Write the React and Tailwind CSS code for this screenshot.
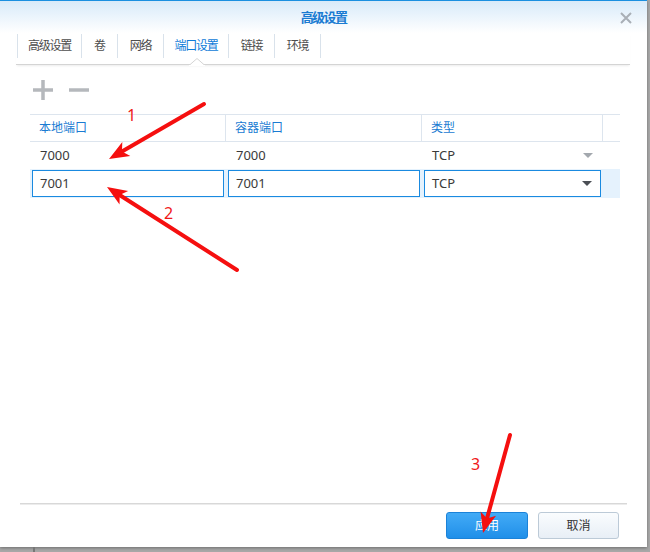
import React from "react";

const font = { fontFamily: '"Noto Sans", "Noto Sans CJK SC", sans-serif' };

const tabs = [
  { label: "高级设置", w: "w-[65px]" },
  { label: "卷", w: "w-[36px]" },
  { label: "网络", w: "w-[46px]" },
  { label: "端口设置", w: "w-[65px]", active: true },
  { label: "链接", w: "w-[46px]" },
  { label: "环境", w: "w-[46px]" },
];

// red annotation arrows (tail -> tip)
function Arrow({ x1, y1, x2, y2 }) {
  const dx = x2 - x1;
  const dy = y2 - y1;
  const len = Math.sqrt(dx * dx + dy * dy);
  const ux = dx / len;
  const uy = dy / len;
  const hl = 20;
  const hw = 8;
  const bx = x2 - ux * hl;
  const by = y2 - uy * hl;
  const pts = `${x2},${y2} ${bx - uy * hw},${by + ux * hw} ${bx + ux * 5},${by + uy * 5} ${bx + uy * hw},${by - ux * hw}`;
  return (
    <g>
      <line x1={x1} y1={y1} x2={bx + ux * 6} y2={by + uy * 6} stroke="#f50f0f" strokeWidth="4" strokeLinecap="round" />
      <polygon points={pts} fill="#f50f0f" />
    </g>
  );
}

function Caret({ dark }) {
  return (
    <svg width="10" height="5" viewBox="0 0 10 5">
      <polygon points="0,0 10,0 5,5" fill={dark ? "#4b4f55" : "#a3a8ae"} />
    </svg>
  );
}

export default function App() {
  return (
    <div className="relative w-[650px] h-[552px] bg-[#a8a8a8] overflow-hidden" style={font}>
      <div className="flex flex-col w-[647px] h-[547px] bg-white shadow-[0_1px_3px_rgba(0,0,0,0.35)]">
        {/* title bar */}
        <div className="relative h-[33px] border-t border-[#1a8fe0] bg-gradient-to-b from-[#d8eaf9] to-white flex items-center justify-center">
          <span className="text-[13px] font-bold text-[#1a7bd2] tracking-[-1.6px] leading-none">高级设置</span>
          <svg className="absolute left-[620px] top-[11px]" width="12" height="12" viewBox="0 0 12 12">
            <path d="M1 1 L11 11 M11 1 L1 11" stroke="#a9afb6" strokeWidth="2" />
          </svg>
        </div>

        {/* tabs */}
        <div className="relative ml-[16px] w-[614px] h-[32px] border-b border-[#d4d4d4] shadow-[0_2px_2px_-1px_rgba(0,0,0,0.08)]">
          <div className="flex ml-[1px] mt-[1px] h-[24px]">
            {tabs.map((t, i) => (
              <div
                key={t.label}
                className={`${t.w} flex items-center justify-center border-r border-[#d9e2eb] ${i === 0 ? "border-l" : ""}`}
              >
                <span className={`text-[12px] tracking-[-1.2px] leading-none ${t.active ? "text-[#0f7bd8]" : "text-[#4d4d4d]"}`}>
                  {t.label}
                </span>
              </div>
            ))}
          </div>
          <svg className="absolute left-[173px] top-[25px]" width="16" height="8" viewBox="0 0 16 8">
            <polyline points="0,7.5 8,0.5 16,7.5" fill="white" stroke="#d4d4d4" strokeWidth="1" />
            <rect x="0" y="7" width="16" height="2" fill="white" />
          </svg>
        </div>

        {/* toolbar */}
        <div className="flex items-center gap-[16px] ml-[33px] mt-[15px] h-[20px]">
          <svg width="20" height="20" viewBox="0 0 20 20">
            <path d="M0 10 H20 M10 0 V20" stroke="#b5b8bc" strokeWidth="3.5" />
          </svg>
          <svg width="20" height="20" viewBox="0 0 20 20">
            <path d="M0 10 H20" stroke="#b5b8bc" strokeWidth="3.5" />
          </svg>
        </div>

        {/* table */}
        <div className="ml-[30px] w-[590px] mt-[14px]">
          <div className="grid grid-cols-[196px_196px_181px_17px] h-[28px] border-t border-b border-[#dde5ee]">
            {["本地端口", "容器端口", "类型"].map((h) => (
              <div key={h} className="flex items-center pl-[9px] border-r border-[#dde5ee] text-[12px] text-[#1a7bd2]">
                {h}
              </div>
            ))}
            <div />
          </div>
          <div className="grid grid-cols-[196px_196px_181px_17px] h-[27px] text-[13px] text-[#3a3a3a]">
            <div className="flex items-center pl-[10px]">7000</div>
            <div className="flex items-center pl-[10px]">7000</div>
            <div className="flex items-center justify-between pl-[10px] pr-[10px]">
              <span>TCP</span>
              <Caret />
            </div>
            <div />
          </div>
          <div className="grid grid-cols-[196px_196px_181px_17px] h-[29px] py-[1px] bg-[#e5f2fd] text-[13px] text-[#3a3a3a]">
            <div className="px-[2px]">
              <div className="h-full bg-white border border-[#1a8ae0] flex items-center pl-[7px]">7001</div>
            </div>
            <div className="px-[2px]">
              <div className="h-full bg-white border border-[#1a8ae0] flex items-center pl-[7px]">7001</div>
            </div>
            <div className="px-[2px]">
              <div className="h-full bg-white border border-[#1a8ae0] flex items-center justify-between pl-[7px] pr-[8px]">
                <span>TCP</span>
                <Caret dark />
              </div>
            </div>
            <div />
          </div>
        </div>

        <div className="flex-1" />

        {/* footer */}
        <div className="mx-[20px] h-[2px] bg-[#d8d8d8] border-b border-[#ececec]" />
        <div className="flex justify-end gap-[10px] pr-[28px] mt-[7px] mb-[8px]">
          <button className="w-[82px] h-[27px] rounded-[3px] border border-[#1b82d8] bg-gradient-to-b from-[#42abf6] to-[#1f8fe9] text-white text-[12px]">
            应用
          </button>
          <button className="w-[81px] h-[27px] rounded-[3px] border border-[#bccad7] bg-gradient-to-b from-[#fafcfe] to-[#e8eff6] text-[#333] text-[12px]">
            取消
          </button>
        </div>
      </div>
      <div className="absolute left-[33px] top-[547px] w-[2px] h-[5px] bg-[#777]" />

      {/* annotations */}
      <svg className="absolute left-0 top-0 pointer-events-none" width="650" height="552">
        <Arrow x1={204} y1={104} x2={109} y2={159} />
        <Arrow x1={237} y1={270} x2={107} y2={187} />
        <Arrow x1={510} y1={435} x2={483} y2={533} />
      </svg>
      <span className="absolute left-[127px] top-[107px] text-[16px] text-[#f01818] leading-none">1</span>
      <span className="absolute left-[164px] top-[205px] text-[16px] text-[#f01818] leading-none">2</span>
      <span className="absolute left-[471px] top-[456px] text-[16px] text-[#f01818] leading-none">3</span>
    </div>
  );
}
